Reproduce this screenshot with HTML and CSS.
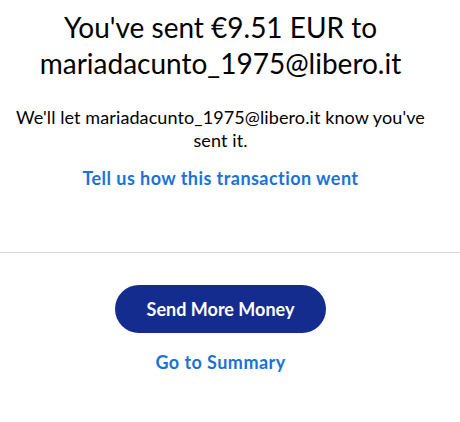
FILE: index.html
```html
<!DOCTYPE html>
<html lang="en">
<head>
<meta charset="utf-8">
<title>Payment sent</title>
<link rel="stylesheet" href="styles.css">
</head>
<body>
<main class="page">
  <section class="confirm">
    <h1 class="title">You've sent €9.51 EUR to mariadacunto_1975@libero.it</h1>
    <p class="note">We'll let mariadacunto_1975@libero.it know you've sent it.</p>
    <a class="link feedback" href="#">Tell us how this transaction went</a>
  </section>
  <hr class="divider">
  <section class="actions">
    <a class="btn-primary" href="#">Send More Money</a>
    <a class="link summary" href="#">Go to Summary</a>
  </section>
</main>
</body>
</html>
```
FILE: styles.css
```css
html, body {
  margin: 0;
  padding: 0;
  background: #ffffff;
}
body {
  font-family: "Lato", "Open Sans", sans-serif;
  color: #000000;
}
.page {
  display: flex;
  flex-direction: column;
}
.confirm,
.actions {
  width: 441px;
  display: flex;
  flex-direction: column;
  align-items: center;
  text-align: center;
}
.confirm {
  padding-top: 9px;
}
.title {
  margin: 0;
  font-size: 28px;
  font-weight: 400;
  line-height: 36px;
  width: 380px;
}
.note {
  margin: 25px 0 0;
  font-size: 18px;
  line-height: 23px;
  letter-spacing: 0.1px;
  width: 420px;
}
.link {
  color: #1a72d9;
  font-weight: 700;
  font-size: 18px;
  line-height: 24px;
  letter-spacing: 0.45px;
  text-decoration: none;
}
.feedback {
  margin-top: 14px;
}
.divider {
  margin: 62px 0 0;
  border: 0;
  height: 1px;
  background: #d9d9d9;
  width: 100%;
}
.actions {
  padding-top: 32px;
}
.btn-primary {
  box-sizing: border-box;
  width: 211px;
  height: 48px;
  border-radius: 24px;
  background: #142c8e;
  color: #ffffff;
  font-weight: 700;
  font-size: 18px;
  display: flex;
  align-items: center;
  justify-content: center;
  text-decoration: none;
}
.summary {
  margin-top: 17px;
}
```
